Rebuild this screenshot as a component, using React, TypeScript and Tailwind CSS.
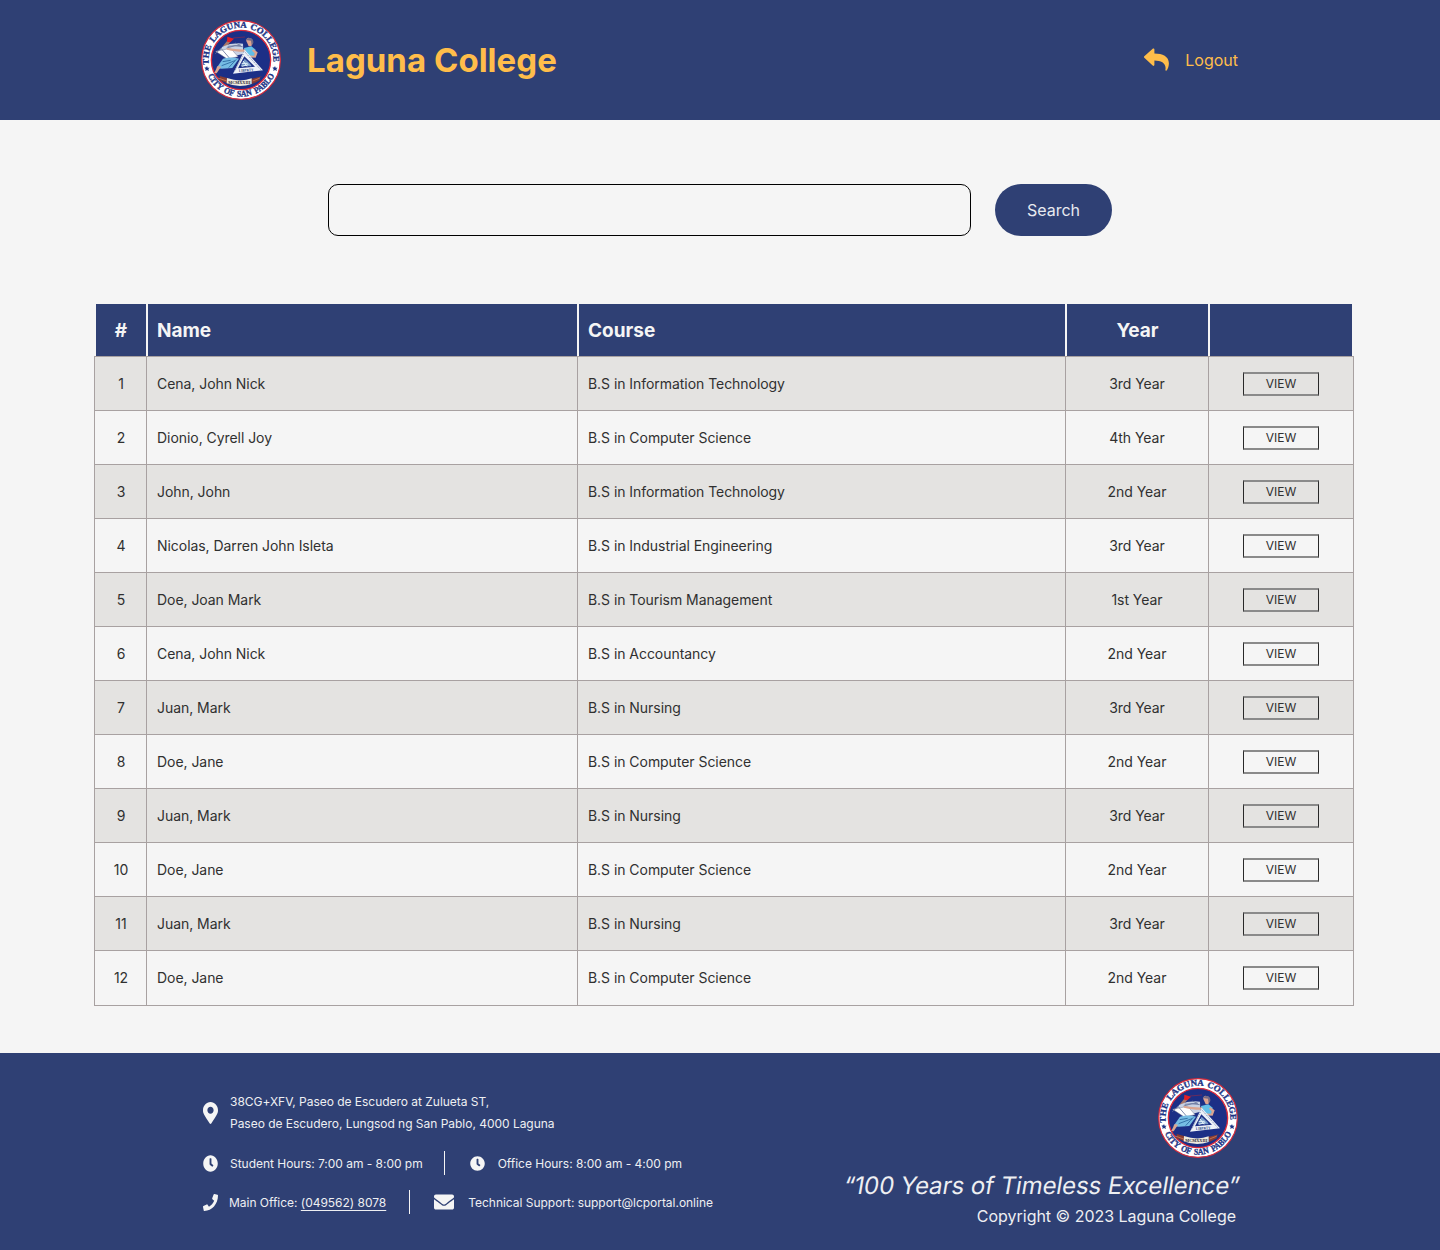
import { useId } from "react";
import { FaMapMarkerAlt, FaClock, FaPhone, FaEnvelope } from "react-icons/fa";

const students = [
  ["Cena, John Nick", "B.S in Information Technology", "3rd Year"],
  ["Dionio, Cyrell Joy", "B.S in Computer Science", "4th Year"],
  ["John, John", "B.S in Information Technology", "2nd Year"],
  ["Nicolas, Darren John Isleta", "B.S in Industrial Engineering", "3rd Year"],
  ["Doe, Joan Mark", "B.S in Tourism Management", "1st Year"],
  ["Cena, John Nick", "B.S in Accountancy", "2nd Year"],
  ["Juan, Mark", "B.S in Nursing", "3rd Year"],
  ["Doe, Jane", "B.S in Computer Science", "2nd Year"],
  ["Juan, Mark", "B.S in Nursing", "3rd Year"],
  ["Doe, Jane", "B.S in Computer Science", "2nd Year"],
  ["Juan, Mark", "B.S in Nursing", "3rd Year"],
  ["Doe, Jane", "B.S in Computer Science", "2nd Year"],
];

function Seal() {
  const id = useId();
  return (
    <svg viewBox="0 0 240 240" className="size-20 shrink-0">
      <defs>
        <path id={id + "t"} d="M 24.2 135 A 97 97 0 1 1 215.8 135" />
        <path id={id + "b"} d="M 19.5 164.7 A 110 110 0 0 0 220.5 164.7" />
      </defs>
      <circle cx="120" cy="120" r="118" fill="#fff" stroke="#dc2b3b" strokeWidth="3.5" />
      <circle cx="120" cy="120" r="89" fill="#1c2f86" stroke="#dc2b3b" strokeWidth="4" />
      <g fill="#1c3485" fontFamily="Liberation Serif, serif" fontWeight="700" stroke="#1c3485" strokeWidth="1">
        <text fontSize="26" wordSpacing="4">
          <textPath href={"#" + id + "t"} startOffset="2" textLength="324" lengthAdjust="spacingAndGlyphs">THE LAGUNA COLLEGE</textPath>
        </text>
        <text fontSize="26" wordSpacing="5">
          <textPath href={"#" + id + "b"} startOffset="2" textLength="250" lengthAdjust="spacingAndGlyphs">CITY OF SAN PABLO</textPath>
        </text>
      </g>
      <g fill="#1c3485">
        <path d="M18 138l2 5 6 0-4 4 2 6-6-3-5 3 1-6-4-4 6-1z" />
        <path d="M222 138l2 5 6 0-4 4 2 6-6-3-5 3 1-6-4-4 6-1z" />
      </g>
      {/* torch and open book */}
      <path d="M66 78l14-17 8 5-15 17z" fill="#a77669" />
      <path d="M78 65l1-15 20 6-11 11z" fill="#e21f26" />
      <path d="M96 54l36-3" stroke="#8e2949" strokeWidth="2" />
      <path d="M64 80q30-13 62-9l1 30-28 8-48-11z" fill="#c9d2e4" />
      <path d="M44 94l45-9 22 25-32 7z" fill="#fff" stroke="#777f94" strokeWidth="1.5" />
      <path d="M43 101l17-16 26 30M80 79l39-3-16-7M77 84l25-7 23 3" fill="none" stroke="#68759c" strokeWidth="2.5" />
      {/* seated figure */}
      <path d="M66 116q25-7 48 0l-20 28-32 2-16-1z" fill="#76bde4" />
      <path d="M65 125l24-4M62 137l40-15M83 143l23-25" stroke="#28649e" strokeWidth="2.5" />
      <path d="M50 138l10 2-13 20-7-1z" fill="#dba590" />
      <path d="M129 84l22-5 13 10-4 23-26-2z" fill="#62bee8" />
      <path d="M132 88q-20 1-56-4l2 5q35 8 56 6zM157 88l13 9-6 16-26-2v-5l21 1 2-7-8-8z" fill="#dba590" />
      <path d="M136 63q-2-7 7-10l10 4 3 12-5 9-8 1z" fill="#dfa390" />
      <path d="M134 60q6-9 16-5 8 3 7 14l-5 7-2-14z" fill="#756b85" />
      {/* inscribed triangle */}
      <path fillRule="evenodd" d="M131 89l55 62-90 10zM130 109l-19 36 51-5z" fill="#edf1f8" />
      <path d="M131 95l48 54M127 102l-26 52" stroke="#526594" strokeWidth="2" strokeDasharray="4 3" />
      <path d="M119 138l12-22 17 16 4 7z" fill="#789bc8" />
      <path d="M122 130h18m-14-7l12 16m-16 0l20-5" stroke="#e6f5fa" strokeWidth="3" />
      <text x="114" y="156" fontSize="11" fontFamily="Liberation Serif, serif" fontWeight="700" fill="#203579" transform="rotate(-4 114 156)" textLength="44" lengthAdjust="spacingAndGlyphs">LIBERTY</text>
      {/* motto ribbon */}
      <path d="M56 168l25 7-2 15-30-12 8-2zM183 169l-33 8 4 15 25-13-7-2z" fill="#863c32" />
      <path d="M52 174l25 9M177 174l-22 9" stroke="#df8b61" strokeWidth="2" />
      <path d="M78 174q40 14 74 1v17q-38 13-75-2z" fill="#eeeade" />
      <text x="82" y="192" fontSize="14" fontFamily="Liberation Serif, serif" fontWeight="700" fill="#302e38" textLength="66" lengthAdjust="spacingAndGlyphs">MCMXXIII</text>
    </svg>
  );
}

function BackArrow() {
  return (
    <svg viewBox="0 0 25 23" className="mb-0.5 h-[23px] w-[25px]" fill="currentColor">
      <path d="M.3 8.3 8.7.7C9.4.1 10.4.5 10.4 1.4V5.4C18.6 5.4 24.8 8.3 24.9 15.2 24.9 18 24 20.4 22.9 22.2 22.3 23 21.1 22.7 21.4 21.8 22.6 15.3 17.6 12.5 10.4 12.4V16.8C10.4 17.8 9.4 18.2 8.7 17.6L.3 9.8Q-.4 9 .3 8.3Z" />
    </svg>
  );
}

const columns = "grid grid-cols-[52px_431px_488px_143px_146px]";

export default function App() {
  return (
    <div className="flex h-[1250px] w-[1440px] flex-col bg-[#f5f5f5] font-['Inter',sans-serif] text-[#303030] antialiased">
      <header className="flex h-[120px] items-center justify-between bg-[#2f4074] pr-[202px] pl-[201px] text-[#ffbd4a]">
        <div className="flex items-center gap-6">
          <Seal />
          <h1 className="pl-0.5 text-[33px] leading-10 font-bold tracking-[0.03px]">Laguna College</h1>
        </div>
        <button className="flex items-center gap-4">
          <BackArrow />
          <span className="text-base">Logout</span>
        </button>
      </header>

      <main className="flex flex-1 flex-col items-center pt-16">
        <form className="flex gap-6" onSubmit={(e) => e.preventDefault()}>
          <input aria-label="Search students" className="h-[52px] w-[643px] rounded-[10px] border border-black px-4 outline-none" />
          <button className="h-[52px] w-[117px] rounded-full bg-[#2f4074] text-base text-[#e8eaf0]">Search</button>
        </form>

        <section className="mt-[68px] ml-2 w-[1260px]">
          <div className="mr-0.5 ml-0.5 grid h-[52px] grid-cols-[50px_429px_486px_141px_142px] gap-x-0.5 text-[19px] font-bold text-[#f5f5f5] *:flex *:items-center *:bg-[#2f4074] *:pt-0.5">
            <div className="justify-center">#</div>
            <div className="pl-[9px]">Name</div>
            <div className="pl-[9px]">Course</div>
            <div className="justify-center">Year</div>
            <div />
          </div>
          <div className="border-b border-[#a8a1a1] text-sm tracking-[-0.05px]">
            {students.map(([name, course, year], i) => (
              <div key={i} className={`${columns} h-[54px] border-t border-r border-[#a8a1a1] *:flex *:items-center *:border-l *:border-[#a8a1a1] last:h-[55px] last:*:pb-px odd:bg-[#e4e3e1]`}>
                <div className="justify-center pl-px">{i + 1}</div>
                <div className="pl-2.5">{name}</div>
                <div className="pl-2.5">{course}</div>
                <div className="justify-center">{year}</div>
                <div className="justify-center pr-0.5">
                  <button className="h-6 w-[76px] border-x border-y-2 border-x-[#292929] border-y-[#8a8a8a] pt-px pl-px text-xs leading-4">VIEW</button>
                </div>
              </div>
            ))}
          </div>
        </section>
      </main>

      <footer className="flex h-[197px] justify-between bg-[#2f4074] pr-[200px] pl-[203px] text-[#eeeff2] [&_svg]:text-[#f5f5f5]">
        <div className="pt-[38px] text-xs tracking-[-0.025px]">
          <div className="flex items-center gap-3">
            <FaMapMarkerAlt preserveAspectRatio="none" className="h-[22px] w-[15px]" />
            <p className="leading-[22px]">
              38CG+XFV, Paseo de Escudero at Zulueta ST,
              <br />
              Paseo de Escudero, Lungsod ng San Pablo, 4000 Laguna
            </p>
          </div>
          <div className="mt-4 flex h-6 items-center">
            <FaClock preserveAspectRatio="none" className="h-[17px] w-[15px]" />
            <span className="ml-3 pt-0.5">Student Hours: 7:00 am - 8:00 pm</span>
            <span className="ml-[21px] h-6 w-px bg-[#f5f5f5]" />
            <FaClock className="ml-[25px] size-[15px]" />
            <span className="ml-[13px] pt-0.5">Office Hours: 8:00 am - 4:00 pm</span>
          </div>
          <div className="mt-[15px] flex h-6 items-center">
            <FaPhone preserveAspectRatio="none" className="h-[17px] w-[15px]" />
            <span className="ml-[11px] pt-0.5">Main Office: <span className="underline underline-offset-[3px]">(049562) 8078</span></span>
            <span className="ml-[23px] h-6 w-px bg-[#f5f5f5]" />
            <FaEnvelope className="ml-6 size-5" />
            <span className="ml-3.5 pt-0.5">Technical Support: support@lcportal.online</span>
          </div>
        </div>
        <div className="flex flex-col items-end pt-[25px]">
          <div className="mr-0.5"><Seal /></div>
          <p className="mt-3 mr-px -skew-x-[9.4deg] text-2xl leading-8 tracking-[-0.09px]">“100 Years of Timeless Excellence”</p>
          <p className="mt-0.5 mr-1 text-base leading-6 tracking-[-0.02px]">Copyright © 2023 Laguna College</p>
        </div>
      </footer>
    </div>
  );
}
